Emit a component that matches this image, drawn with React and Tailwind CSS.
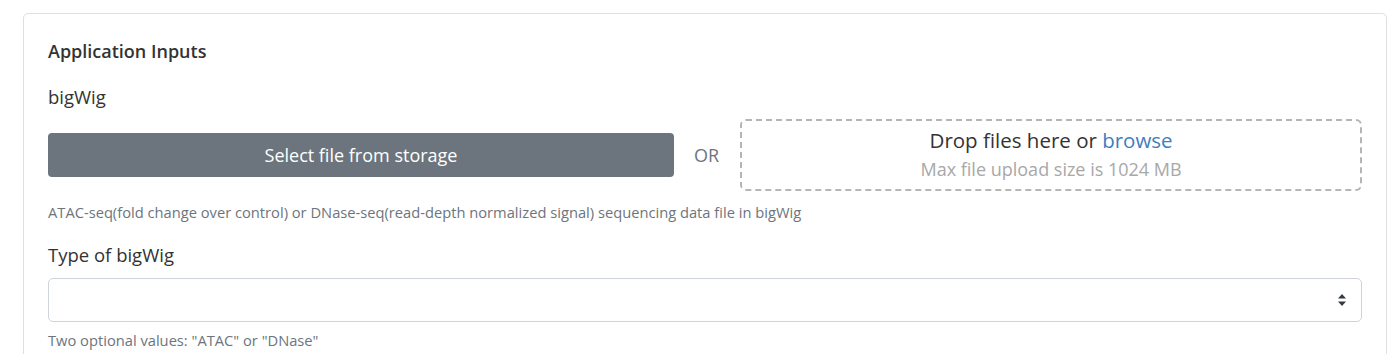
const SelectArrows = () => (
  <svg width="10" height="14" viewBox="0 0 10 14" className="text-[#343a40]">
    <path d="M5 1 L9 5.5 H1 Z" fill="currentColor" />
    <path d="M5 13 L9 8.5 H1 Z" fill="currentColor" />
  </svg>
);

const App = () => {
  return (
    <div className="h-[354px] overflow-hidden bg-white pt-[13px] pl-[23px] pr-[9px] font-['Open_Sans',sans-serif] text-[#212529]">
      <div className="rounded-[5px] border border-[#dfdfdf] px-6 pt-[27px] pb-6">
        <h2 className="text-[18px] font-semibold leading-[20px] text-[#333]">Application Inputs</h2>

        <div className="mt-[24px] text-[18.5px] leading-[24px] text-[#333]">bigWig</div>

        <div className="mt-[10px] flex items-center">
          <button className="h-[44px] w-[626px] shrink-0 rounded-[4px] bg-[#6c757d] text-[18px] text-white">
            Select file from storage
          </button>
          <span className="ml-5 mr-[21px] text-[18px] text-[#6c757d]">OR</span>
          <div className="flex h-[72px] flex-1 flex-col items-center justify-center rounded-[6px] border-2 border-dashed border-[#b5b5b5]">
            <div className="text-[20.5px] leading-[29px] text-[#333]">
              Drop files here or <span className="text-[#3f7dc0]">browse</span>
            </div>
            <div className="text-[18px] leading-[29px] text-[#a8a8a8]">Max file upload size is 1024 MB</div>
          </div>
        </div>

        <div className="mt-[11px] text-[14.7px] leading-[20px] text-[#6c757d]">
          ATAC-seq(fold change over control) or DNase-seq(read-depth normalized signal) sequencing data file in bigWig
        </div>

        <div className="mt-[21px] text-[18.5px] leading-[24px] text-[#333]">Type of bigWig</div>

        <div className="mt-[11px] flex h-[44px] items-center justify-end rounded-[5px] border border-[#ced4da] pr-[14px]">
          <SelectArrows />
        </div>

        <div className="mt-[8px] text-[14.7px] leading-[20px] text-[#6c757d]">
          Two optional values: "ATAC" or "DNase"
        </div>
      </div>
    </div>
  );
};

export default App;
